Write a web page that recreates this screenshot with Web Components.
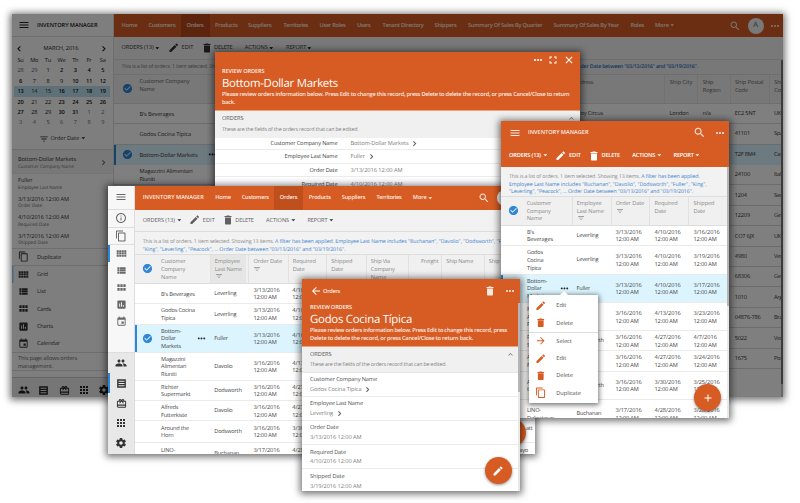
<!DOCTYPE html>
<html lang="en">
<head>
<meta charset="utf-8">
<title>Inventory Manager</title>
<style>
html,body{margin:0;background:#fff;width:800px;height:503px;overflow:hidden}
body{position:relative;font-family:"Open Sans","Noto Sans",sans-serif;font-size:5.65px;line-height:7.65px;color:#484848;text-rendering:geometricPrecision;--o:#d65c24;--b:#2f86d6}
desktop-window,dialog-window,tablet-window,phone-list,phone-form{position:absolute}
desktop-window{left:12px;top:14px;width:771px;height:383px}
dialog-window{left:215px;top:52px;width:365px;height:136px}
tablet-window{left:108px;top:186px;width:427px;height:268px}
phone-list{left:501px;top:121px;width:228px;height:297px}
phone-form{left:302px;top:279px;width:218px;height:212px}
</style>
</head>
<body>
<desktop-window></desktop-window>
<dialog-window></dialog-window>
<tablet-window></tablet-window>
<phone-list></phone-list>
<phone-form></phone-form>
<script>
const ICONS={
menu:'M3 18h18v-2H3v2zm0-5h18v-2H3v2zm0-7v2h18V6H3z',
search:'M15.5 14h-.79l-.28-.27C15.41 12.59 16 11.11 16 9.5 16 5.91 13.09 3 9.5 3S3 5.91 3 9.5 5.91 16 9.5 16c1.61 0 3.09-.59 4.23-1.57l.27.28v.79l5 4.99L20.49 19l-4.99-5zm-6 0C7.01 14 5 11.99 5 9.5S7.01 5 9.5 5 14 7.01 14 9.5 11.99 14 9.5 14z',
edit:'M3 17.25V21h3.75L17.81 9.94l-3.75-3.75L3 17.25zM20.71 7.04c.39-.39.39-1.02 0-1.41l-2.34-2.34c-.39-.39-1.02-.39-1.41 0l-1.83 1.83 3.75 3.75 1.83-1.83z',
del:'M6 19c0 1.1.9 2 2 2h8c1.1 0 2-.9 2-2V7H6v12zM19 4h-3.5l-1-1h-5l-1 1H5v2h14V4z',
check:'M12 2C6.48 2 2 6.48 2 12s4.48 10 10 10 10-4.48 10-10S17.52 2 12 2zm-2 15l-5-5 1.41-1.41L10 14.17l7.59-7.59L19 8l-9 9z',
dots:'M6 10c-1.1 0-2 .9-2 2s.9 2 2 2 2-.9 2-2-.9-2-2-2zm12 0c-1.1 0-2 .9-2 2s.9 2 2 2 2-.9 2-2-.9-2-2-2zm-6 0c-1.1 0-2 .9-2 2s.9 2 2 2 2-.9 2-2-.9-2-2-2z',
full:'M7 14H5v5h5v-2H7v-3zm-2-4h2V7h3V5H5v5zm12 7h-3v2h5v-5h-2v3zM14 5v2h3v3h2V5h-5z',
close:'M19 6.41L17.59 5 12 10.59 6.41 5 5 6.41 10.59 12 5 17.59 6.41 19 12 13.41 17.59 19 19 17.59 13.41 12z',
back:'M20 11H7.83l5.59-5.59L12 4l-8 8 8 8 1.41-1.41L7.83 13H20v-2z',
fwd:'M12 4l-1.41 1.41L16.17 11H4v2h12.17l-5.58 5.59L12 20l8-8z',
info:'M11 17h2v-6h-2v6zm1-15C6.48 2 2 6.48 2 12s4.48 10 10 10 10-4.48 10-10S17.52 2 12 2zm0 18c-4.41 0-8-3.59-8-8s3.59-8 8-8 8 3.59 8 8-3.59 8-8 8zM11 9h2V7h-2v2z',
copy:'M16 1H4c-1.1 0-2 .9-2 2v14h2V3h12V1zm3 4H8c-1.1 0-2 .9-2 2v14c0 1.1.9 2 2 2h11c1.1 0 2-.9 2-2V7c0-1.1-.9-2-2-2zm0 16H8V7h11v14z',
grid:'M1.5 9h4.5V5H1.5zM7 9h4.5V5H7zM12.5 9H17V5h-4.500zM18 9h4.500V5H18zM1.500 14H6v-4H1.500zM7 14h4.500v-4H7zM12.500 14H17v-4h-4.500zM18 14h4.500v-4H18zM1.500 19H6v-4H1.500zM7 19h4.500v-4H7zM12.500 19H17v-4h-4.500zM18 19h4.500v-4H18z',
list:'M3 14h4v-4H3v4zm0 5h4v-4H3v4zM3 9h4V5H3v4zm5 5h13v-4H8v4zm0 5h13v-4H8v4zM8 5v4h13V5H8z',
cards:'M3 11h5V5H3v6zm0 8h5v-6H3v6zm6.500 0h5v-6h-5v6zm6.500 0h5v-6h-5v6zm-6.500-8h5V5h-5v6zM16 5v6h5V5h-5z',
chart:'M19 3H5c-1.1 0-2 .9-2 2v14c0 1.1.9 2 2 2h14c1.1 0 2-.9 2-2V5c0-1.1-.9-2-2-2zM9 17H7v-7h2v7zm4 0h-2V7h2v10zm4 0h-2v-4h2v4z',
event:'M17 12h-5v5h5v-5zM16 1v2H8V1H6v2H5c-1.11 0-1.99.9-1.99 2L3 19c0 1.1.89 2 2 2h14c1.1 0 2-.9 2-2V5c0-1.1-.9-2-2-2h-1V1h-2zm3 18H5V8h14v11z',
people:'M16 11c1.66 0 2.99-1.34 2.99-3S17.66 5 16 5c-1.66 0-3 1.34-3 3s1.34 3 3 3zm-8 0c1.66 0 2.99-1.34 2.99-3S9.66 5 8 5C6.34 5 5 6.34 5 8s1.34 3 3 3zm0 2c-2.33 0-7 1.17-7 3.5V19h14v-2.5c0-2.33-4.67-3.5-7-3.5zm8 0c-.29 0-.62.02-.97.05 1.16.84 1.97 1.97 1.97 3.45V19h6v-2.5c0-2.33-4.67-3.5-7-3.5z',
orders:'M2.500 2.500v19h19v-19zM18.500 8h-13V6h13zM18.500 13h-13v-2h13zM18.500 18h-13v-2h13z',
gift:'M20 6h-2.180c.11-.31.18-.65.18-1 0-1.66-1.34-3-3-3-1.05 0-1.96.54-2.5 1.35l-.5.67-.5-.68C10.96 2.54 10.05 2 9 2 7.34 2 6 3.34 6 5c0 .35.07.69.18 1H4c-1.11 0-1.99.89-1.99 2L2 19c0 1.11.89 2 2 2h16c1.11 0 2-.89 2-2V8c0-1.11-.89-2-2-2zm-5-2c.55 0 1 .45 1 1s-.45 1-1 1-1-.45-1-1 .45-1 1-1zM9 4c.55 0 1 .45 1 1s-.45 1-1 1-1-.45-1-1 .45-1 1-1zm11 15H4v-2h16v2zm0-5H4V8h5.08L7 10.83 8.62 12 11 8.760l1-1.360 1 1.360L15.380 12 17 10.830 14.920 8H20v6z',
apps:'M4 8h4V4H4v4zm6 12h4v-4h-4v4zm-6 0h4v-4H4v4zm0-6h4v-4H4v4zm6 0h4v-4h-4v4zm6-10v4h4V4h-4zm-6 4h4V4h-4v4zm6 6h4v-4h-4v4zm0 6h4v-4h-4v4z',
gear:'M19.43 12.98c.04-.32.07-.64.07-.98s-.03-.66-.07-.98l2.11-1.65c.19-.15.24-.42.12-.64l-2-3.46c-.12-.22-.39-.3-.61-.22l-2.49 1c-.52-.4-1.08-.73-1.69-.98l-.38-2.65C14.46 2.18 14.25 2 14 2h-4c-.25 0-.46.18-.49.42l-.38 2.65c-.61.25-1.17.59-1.69.98l-2.49-1c-.23-.09-.49 0-.61.22l-2 3.46c-.13.22-.07.49.12.64l2.11 1.65c-.04.32-.07.65-.07.98s.03.66.07.98l-2.11 1.65c-.19.15-.24.42-.12.64l2 3.46c.12.22.39.3.61.22l2.49-1c.52.4 1.08.73 1.69.98l.38 2.65c.03.24.24.42.49.42h4c.25 0 .46-.18.49-.42l.38-2.65c.61-.25 1.17-.59 1.69-.98l2.49 1c.23.09.49 0 .61-.22l2-3.46c.12-.22.07-.49-.12-.64l-2.11-1.65zM12 15.5c-1.93 0-3.5-1.57-3.5-3.5s1.57-3.5 3.5-3.5 3.5 1.57 3.5 3.5-1.57 3.5-3.5 3.5z',
filter:'M10 18h4v-2h-4v2zM3 6v2h18V6H3zm3 7h12v-2H6v2z',
right:'M10 5L8 7l5 5-5 5 2 2 7-7z',
left:'M15 5l2 2-5 5 5 5-2 2-7-7z',
up:'M12 8l-6 6 1.41 1.41L12 10.83l4.59 4.58L18 14z',
caret:'M2 7l10 10L22 7z',
add:'M19 13h-6v6h-2v-6H5v-2h6V5h2v6h6v2z'};

/* Square inline icon; "name" picks the glyph, "size" the edge in px. */
customElements.define('ui-icon',class extends HTMLElement{
  connectedCallback(){
    const s=this.getAttribute('size')||10;
    this.attachShadow({mode:'open'}).innerHTML=`<style>:host{display:inline-block;flex:none;width:${s}px;height:${s}px}svg{display:block;width:100%;height:100%;fill:currentColor}</style><svg viewBox="0 0 24 24"><path d="${ICONS[this.getAttribute('name')]}"/></svg>`;
  }});

/* Single-line label; "w" tracks the letters out or in to the given width. */
customElements.define('ui-label',class extends HTMLElement{
  connectedCallback(){
    const root=this.attachShadow({mode:'open'});
    root.innerHTML=`<style>:host{display:inline-block;flex:none;white-space:nowrap;letter-spacing:-.2px;padding-top:1px}</style><span><slot></slot></span>`;
    const w=+this.getAttribute('w');
    if(w){
      this.style.letterSpacing='0';
      const n=root.querySelector('span').getBoundingClientRect().width;
      this.style.letterSpacing=(w-n)/this.textContent.length+'px';
    }
  }});

customElements.define('fab-button',class extends HTMLElement{
  connectedCallback(){
    this.attachShadow({mode:'open'}).innerHTML=`<style>:host{position:absolute;display:flex;align-items:center;justify-content:center;width:27px;height:27px;border-radius:50%;background:var(--o);color:#fff;box-shadow:0 1px 3px rgba(0,0,0,.45)}</style><slot></slot>`;
  }});

const I=(n,s=10,c='')=>`<ui-icon name="${n}" size="${s}"${c?` style="color:${c}"`:''}></ui-icon>`;
const T=(t,w=0,st='')=>t?`<ui-label${w?` w="${w}"`:''}${st?` style="${st}"`:''}>${t}</ui-label>`:'';
const ic=(n,c,s=10,col='')=>[c-s/2,I(n,s,col)];
/* A grid row whose cells start at the given x; x0 is the row's own left edge. */
const row=(x0,h,items,cls='',st='')=>{
  const c=items.map((it,i)=>i<items.length-1?(items[i+1][0]-it[0]).toFixed(2)+'px':'max-content').join(' ');
  return `<div class="row ${cls}" style="height:${h}px;padding-left:${(items[0][0]-x0).toFixed(2)}px;grid-template-columns:${c};${st}">${items.map(i=>`<div class="c ${i[2]||''}">${i[1]}</div>`).join('')}</div>`;
};
const lines=(...a)=>a.map(t=>`<div class="ln">${Array.isArray(t)?T(...t):T(t)}</div>`).join('');
const tools=(x,dark,d)=>[[x,T('ORDERS (13)',32)],ic('caret',x+36,4.5,dark),ic('edit',x+52,11.5),[x+60,T('EDIT',12)],ic('del',x+85,12),[x+92.5,T('DELETE',18.5)],[x+123.3,T('ACTIONS',23)],ic('caret',x+150,4.5,dark),[x+164.6,T('REPORT',20)],ic('caret',x+188.200,4.5,dark)];

const BASE=`<style>
:host{display:block;box-sizing:border-box;box-shadow:0 1px 7px 2px rgba(0,0,0,.55)}
*{box-sizing:border-box}
.row{display:grid;align-items:center;white-space:nowrap}
.row>.c{display:flex;flex-direction:column;justify-content:center;align-items:flex-start;height:auto;min-width:0}
.c.end{align-items:flex-end}
.ln{height:7.65px;line-height:7.65px;white-space:nowrap;display:flex}
.o{background:var(--o);color:#fbe9e0}
.b{font-weight:600}
.blue{color:#3f86cf}
.hd{background:#f0f0f0;color:#8a8a8a}
.dv{border-left:.8px solid #e2e2e2;align-self:stretch}
.clip{overflow:hidden;height:100%;width:100%;position:relative}
.sel{background:#dbf4fe}
.flex{display:flex}
</style>`;
const define=(name,html)=>customElements.define(name,class extends HTMLElement{
  connectedCallback(){this.attachShadow({mode:'open'}).innerHTML=BASE+html}
});

/* Month calendar used in the desktop side bar. */
const weeks=['28 29 1 2 3 4 5','6 7 8 9 10 11 12','13 14 15 16 17 18 19','20 21 22 23 24 25 26','27 28 29 30 31 1 2','3 4 5 6 7 8 9'];
const strong=[[3,4,5,6],[0,4,5,6],[0,3,4,5,6],[0,3,4,5,6],[0,3,4],[]];
define('month-calendar',`<style>:host{box-shadow:none;padding:5.500px 0 0 1.700px;color:#222}
.t{display:flex;justify-content:space-between;align-items:center;height:12px;width:95.500px;padding:0 1px 0 0}
.g{display:grid;grid-template-columns:repeat(7,13.700px);text-align:center;height:10.400px;align-items:center;width:96px}
.dim{color:#6c6c6c}.s{font-weight:600;color:#111}.now{background:#bfe3f0}</style>
<div class="t">${I('left',9.5)}${T('MARCH, 2016',35)}${I('right',9.5)}</div>
<div class="g" style="height:11px">${'Su Mo Tu We Th Fr Sa'.split(' ').map(d=>T(d)).join('')}</div>
${weeks.map((w,i)=>`<div class="g ${i==2?'now':''}">${w.split(' ').map((d,j)=>`<ui-label class="${strong[i].includes(j)?'s':''} ${(i==0&&j<2)||(i==4&&j>4)||i==5?'dim':''}">${d}</ui-label>`).join('')}</div>`).join('')}`);

/* Desktop window, dimmed by the modal backdrop. */
const item=(h,n,t,w,st='')=>row(0,h,[ic(n,11.700,11,'#333'),[25,T(t,w)]],'',st);
const sideField=(a,aw,b,bw)=>`<div style="height:18.500px;padding:2.300px 0 0 6px">${lines([a,aw])}<div class="ln" style="font-size:4.700px;color:#666;height:7px;line-height:6.500px">${T(b,bw)}</div></div>`;
const dRow=(name,city,reg,post,country,addr='')=>row(113,20.430,[
 [121,name=='Bottom-Dollar Markets'?I('check',11,'var(--b)'):''],[139,name?lines(...[].concat(name).map(n=>[n,{'Bottom-Dollar Markets':58,"B's Beverages":34.500,'Godos Cocina Típica':51.500,'Magazzini Alimentari':53}[n]||0])):''],
 [206,name=='Bottom-Dollar Markets'?I('dots',11,'#000'):''],[580,addr?T(addr,22.500):''],[669,T(city,city?19:0)],[702,T(reg)],[734.300,T(post)],[773.400,T(country)]],name=='Bottom-Dollar Markets'?'sel':'rl',name=='Bottom-Dollar Markets'?'box-shadow:inset 2px 0 var(--b)':'');
define('desktop-window',`<style>
.side{width:101.500px;background:#fdfdfd;border-right:1px solid #ddd;color:#333}
.rl{border-bottom:.8px solid #d8d8d8}
.shade{position:absolute;inset:0;background:rgba(0,0,0,.5)}
.main{flex:1;min-width:0;overflow:hidden;color:#333}
</style><div class="clip flex" style="background:#fff">
<div class="side">
 ${row(12,23,[ic('menu',23.500,12),[37,T('INVENTORY MANAGER',60.500)]],'b','border-bottom:1px solid #ddd;color:#222')}
 <month-calendar></month-calendar>
 <div class="flex" style="height:21.600px;align-items:center;padding-left:27px;gap:1.500px">${I('filter',10)}${T('Order Date',28.500)}${I('caret',4.5)}</div>
 <div style="border-top:1px solid #ddd;border-bottom:1px solid #e8e8e8;background:#f0f0f0;height:24.500px;padding:4.500px 5px 0 6px;display:flex;justify-content:space-between"><div>${lines(['Bottom-Dollar Markets',58])}<div style="font-size:4.700px;color:#777;line-height:6.500px">${T('Customer Company Name',56)}</div></div><div style="padding-top:3px">${I('right',9,'#666')}</div></div>
 ${sideField('Fuller',14.500,'Employee Last Name',44)}${sideField('3/13/2016 12:00 AM',51,'Order Date',24)}${sideField('4/10/2016 12:00 AM',51,'Required Date',31)}${sideField('3/17/2016 12:00 AM',51,'Shipped Date',30)}
 ${item(18,'copy','Duplicate',24,'border-top:1px solid #ddd;border-bottom:1px solid #ddd')}
 ${item(17.200,'grid','Grid',11,'box-shadow:inset 1.500px 0 #9cd0f5')}${item(17.200,'list','List',9)}${item(17.200,'cards','Cards',14)}${item(17.200,'chart','Charts',16)}${item(17.200,'event','Calendar',23)}
 <div style="border-top:1px solid #ddd;border-bottom:1px solid #ddd;height:19.500px;padding:1.500px 6px;color:#666">${lines(['This page allows orders',59],['management.',35])}</div>
 <div style="height:6px"></div>
 ${row(12,24.500,[ic('people',23.500,12),ic('orders',43.500,11),ic('gift',64,11),ic('apps',84,12),ic('gear',103.500,12)],'','background:linear-gradient(var(--b),var(--b)) 22px 100%/20px 2px no-repeat,#ececec;color:#222;border-top:1px solid #ccc')}
</div>
<div class="main">
 <div class="flex o" style="height:23px">${row(113,23,[[121,T('Home',16)],[148,T('Customers',27)],[180.500,`<div style="background:#b8481b;width:28.500px;height:23px;display:flex;align-items:center;padding-left:5.500px">${T('Orders',17)}</div>`],[214.500,T('Products',22.500)],[247.500,T('Suppliers',23.500)],[283,T('Territories',24.500)],[319,T('User Roles',26)],[356.500,T('Users',13.500)],[382,T('Tenant Directory',41)],[434,T('Shippers',22)],[467.500,T('Summary Of Sales By Quarter',74.500)],[553,T('Summary Of Sales By Year',65.500)],[630,T('Roles',13.500)],[654.500,T('More',14)],ic('caret',672,4.500),ic('search',734,12),[747,`<div style="width:16px;height:16px;border-radius:50%;background:#f3f3f3;color:#555;display:flex;align-items:center;justify-content:center;font-size:7.500px;font-weight:400">${T('A')}</div>`],ic('dots',774,12)],'b')}</div>
 ${row(113,22.500,tools(121,'#000'),'','background:#f3f3f3;border-bottom:1px solid #ddd')}
 <div class="flex" style="height:15px;padding:2.800px 85px 0 8px;justify-content:space-between;font-size:5.300px;background:#f0f0f0;color:#777;border-bottom:.8px solid #ddd"><div>${T('This is a list of orders. 1 item selected. Sh',93.500)}</div><div class="blue b" style="color:#2a72bd">${T('der Date between "03/13/2016" and "03/19/2016".',117.500)}</div></div>
 ${row(113,29.200,[[121,I('check',11,'var(--b)')],[139,lines(['Customer Company',50],'Name')+'<div class="ln"></div>'],[580,'<div style="padding-top:2.500px">'+lines(['dress',12.500],'','')+'</div>'],[663.800,'<div style="padding:2.500px 0 0 4.500px">'+lines(['Ship City',22.500],'','')+'</div>','dv'],[696.700,'<div style="padding:2.500px 0 0 4.500px">'+lines('Ship',['Region',18],'')+'</div>','dv'],[729.500,'<div style="padding:2.500px 0 0 4px">'+lines(['Ship Postal',28.500],'Code','')+'</div>','dv'],[768.800,'<div style="padding:2.500px 0 0 4px">'+lines('Ship','Country','')+'</div>','dv']],'hd','border-bottom:1px solid #ddd;color:#666')}
 ${dRow("B's Beverages",'London','n/a','EC2 5NT','UK','oy Circus')}${dRow('Godos Cocina Típica','','','41101','Spain')}${dRow('Bottom-Dollar Markets','','','T2F 8M4','Canada')}${dRow(['Magazzini Alimentari','Riuniti'],'','','24100','Italy')}
 ${[['1204','Switzerland'],['12209','Germany'],['CO7 6JX','UK'],['4980','Venezuela'],['68306','Germany'],['1010','Argentina'],['04876-786','Brazil'],['5022','Venezuela'],['1675','Portugal']].map(r=>dRow('','','',r[0],r[1])).join('')}
</div>
<div style="position:absolute;right:0;top:46px;bottom:0;width:1.800px;background:linear-gradient(#777 0 324px,#ccc 324px)"></div>
<div class="shade"></div></div>`);

/* Record dialog over the desktop window. */
const dField=(a,aw,b,bw,ch,h)=>`<div style="display:grid;grid-template-columns:122.500px 1fr;column-gap:13px;height:${h}px;align-items:center;border-bottom:1.200px solid #ececec"><div style="text-align:right;color:#444">${T(a,aw)}</div><div class="flex" style="color:#7d7d7d;align-items:center;gap:1.500px">${T(b,bw)}${ch?I('right',9,'#666'):''}</div></div>`;
define('dialog-window',`<div class="clip" style="background:#fff">
<div class="o" style="height:59px;border-bottom:1px solid #eaa27e;padding-left:7px"><div style="margin-left:-7px">${row(215,15,[ic('dots',538,12),ic('full',553,12),ic('close',568.500,12)],'','color:#fff')}</div>
<div class="b">${lines(['REVIEW ORDERS',42.500])}</div><div style="font-size:11.400px;line-height:16px;height:15.700px;color:#fff">${T('Bottom-Dollar Markets',116)}</div><div class="b">${lines(['Please review orders information below. Press Edit to change this record, press Delete to delete the record, or press Cancel/Close to return',347.500],['back.',13])}</div></div>
<div style="height:26.500px;background:#f0f0f0;padding:3px 4.500px 0 7px"><div class="flex" style="justify-content:space-between;height:11px">${T('ORDERS',21.500,'color:#555')}${I('up',9,'#777')}</div><div style="color:#808080;font-size:5.300px">${T('These are the fields of the orders record that can be edited.',136.500)}</div></div>
${dField('Customer Company Name',67,'Bottom-Dollar Markets',58,1,12.800)}${dField('Employee Last Name',53,'Fuller',14.500,1,13.500)}${dField('Order Date',28,'3/13/2016 12:00 AM',52,0,13.700)}${dField('Required Date',36,'4/10/2016 12:00 AM',52,0,13.700)}
</div>`);

/* Date cell: a date over its time. */
const date=d=>lines([d,d.length*2.92],['12:00 AM',23.200]);
const NAMEW={Customer:24.500,Company:24,Name:15.500,Beverages:26,Employee:25,'Last Name':27,'Order Date':28.500,Required:23,Shipped:21};
const nm=(...a)=>lines(...a.map(t=>[t,NAMEW[t]||0]));
const info=(h,x,ls)=>`<div style="height:${h}px;padding:${x};background:#f2f2f2;color:#8a8a8a;border-bottom:.8px solid #ddd">${ls.map(l=>`<div class="flex" style="height:7.300px;line-height:7.300px;gap:1.300px;font-size:5.300px">${l}</div>`).join('')}</div>`;

/* Tablet window. */
const tRow=(h,n,e,d,r,sel,st='')=>row(135.500,h,[[142.500,sel?I('check',11,'var(--b)'):''],[161.300,nm(...n)],[196.500,sel?I('dots',11,'#222'):''],[214.500,T(e)],[253.600,date(d)],[292.500,date(r)]],sel?'sel':'',(sel?'box-shadow:inset 2px 0 var(--b);':'')+'border-bottom:1.200px solid #eaeaea;'+st);
const hc=(...a)=>`<div style="padding-left:4px">${nm(...a)}</div>`;
define('tablet-window',`<style>.s{display:flex;align-items:center;justify-content:center;color:#686868}.l{border-bottom:1px solid #ddd}.k{color:#333}.on{box-shadow:inset 2px 0 var(--b)}</style>
<div class="clip flex" style="background:#fff">
<div style="width:27.300px;background:#f7f7f7;border-right:.7px solid #ddd">
${[['menu',23.600,'l',12],['info',18,'l',12],['copy',17,'l',12],['grid',17.300,'on',11],['list',17,'',11],['cards',17,'',11],['chart',17,'',11],['event',17,'',11]].map(a=>`<div class="s ${a[2]}" style="height:${a[1]}px">${I(a[0],a[3])}</div>`).join('')}
<div style="height:22.200px"></div>
<div style="background:#e8e8e8;border-top:1px solid #ddd;height:104px">${['people','orders','gift','apps','gear'].map((n,i)=>`<div class="s k ${i==1?'on':''}" style="height:20px">${I(n,i==1||i==2?11:12)}</div>`).join('')}</div>
</div>
<div style="width:399.700px;overflow:hidden">
${row(135.500,23.600,[[143,T('INVENTORY MANAGER',61)],[215.500,T('Home',15.500)],[242,T('Customers',27)],[274.300,`<div style="background:#bf501e;width:28.500px;height:23.600px;display:flex;align-items:center;padding-left:5.700px">${T('Orders',17.500)}</div>`],[309,T('Products',22)],[342,T('Suppliers',23.500)],[376.700,T('Territories',25)],[413,T('More',14)],ic('caret',430.500,4.500),ic('search',484.500,12),[497.500,'<div style="width:16px;height:16px;border-radius:50%;background:#eee"></div>']],'o b')}
${row(135.500,22,tools(143,'#333'),'','background:#f2f2f2;border-bottom:1px solid #ddd;color:#606060')}
${info(23,'5.800px 0 0 7.500px',[T('This is a list of orders. 1 item selected. Showing 13 items.',131)+T('A filter has been applied. Employee Last Name includes "Buchanan", "Davolio", "Dodsworth", "F',226,'color:#3f86cf'),T('"King", "Leverling", "Peacock", ... Order Date between "03/13/2016" and "03/19/2016".',202.500,'color:#3f86cf')])}
${row(135.500,29,[[142.500,I('check',11,'var(--b)')],[161.300,nm('Customer','Company','Name')],[210.500,'<div style="background:#e6e6e6;height:100%;padding:2.500px 0 0 3.500px;width:35px">'+nm('Employee','Last Name')+'<div>'+I('filter',8)+'</div></div>','dv'],[248.700,hc('Order Date')+'<div style="padding-left:4px;height:15.300px">'+I('filter',8)+'</div>','dv'],[288,hc('Required','Date',''),'dv'],[326.500,hc('Shipped','Date',''),'dv'],[366,hc('Ship Via','Company','Name'),'dv'],[408.300,`<div style="width:29.500px;display:flex;justify-content:flex-end">${T('Freight',17.500)}</div><div style="height:15.300px"></div>`,'dv'],[441.500,hc('Ship Name','',''),'dv'],[484,hc('Ship','',''),'dv']],'hd','border-bottom:1px solid #ddd')}
${tRow(20.700,["B's Beverages"],'Leverling','3/13/2016','4/10/2016')}
${tRow(20.300,['Godos Cocina','Típica'],'Leverling','3/13/2016','4/10/2016')}
${tRow(28.200,['Bottom-','Dollar','Markets'],'Fuller','3/13/2016','4/10/2016',1)}
${tRow(28,['Magazzini','Alimentari','Riuniti'],'Davolio','3/16/2016','4/13/2016')}
${tRow(20.300,['Richter','Supermarkt'],'Dodsworth','3/16/2016','4/27/2016')}
${tRow(20.300,['Alfreds','Futterkiste'],'Davolio','3/16/2016','4/27/2016')}
<div class="flex" style="justify-content:space-between;border-bottom:1.200px solid #eaeaea">${tRow(20.200,['Around the','Horn'],'Dodsworth','3/16/2016','3/30/2016',0,'border:0')}<div style="padding:3px 2.500px 0 0">${T('att')}</div></div>
<div class="flex" style="justify-content:space-between">${tRow(20.500,['LINO-',''],'Buchanan','3/17/2016','4/28/2016',0,'border:0;padding-top:1.500px')}<div style="padding:3px 7px 0 0">${T('ayo')}</div></div>
</div>
<fab-button style="left:390.500px;top:232.500px"></fab-button>
</div>`);

/* Context menu that opens from a row's dots. */
const mi=(n,t,w,st='')=>`<div style="display:grid;grid-template-columns:14px 1fr;column-gap:7px;padding-left:6.300px;height:17.250px;align-items:center;${st}">${I(n,11.500,'var(--o)')}${T(t,w)}</div>`;
define('row-menu',`<style>:host{position:absolute;background:#fff;box-shadow:0 1px 5px 1px rgba(0,0,0,.55);width:69px;height:108px;padding-top:2px;color:#505050}
.tip{position:absolute;left:30.500px;top:-4.500px;border:4.500px solid transparent;border-top:0;border-bottom-color:#fff}</style><div class="tip"></div>
${mi('edit','Edit',10)}${mi('del','Delete',16.500)}<div style="height:1px;background:#ddd"></div>${mi('fwd','Select',15.500)}${mi('edit','Edit',10)}${mi('del','Delete',16.500)}${mi('copy','Duplicate',24.500)}`);

/* Phone-sized list. */
const pRow=(h,n,e,d,r,s,sel)=>row(501,h,[[508,''],[527,nm(...n)],[558.500,sel?I('dots',11,'#222'):''],[576.500,T(e)],[615.500,date(d)],[654.500,date(r)],[693.500,date(s)]],sel?'sel':'',(sel?'box-shadow:inset 2px 0 var(--b);':'')+'border-bottom:1.200px solid #eaeaea');
define('phone-list',`<div class="clip" style="background:#fff">
<div class="o" style="height:46px">${row(501,23,[ic('menu',514.500,12),[528,T('INVENTORY MANAGER',60.500)],ic('search',699,13),ic('dots',719.500,12)],'b')}${row(501,23,tools(509),'b','color:#fff')}</div>
<div style="width:226.500px">
${info(29.500,'5.400px 0 0 8px',[T('This is a list of orders. 1 item selected. Showing 13 items.',131)+T('A filter has been applied.',58.500,'color:#3f86cf'),T('Employee Last Name includes "Buchanan", "Davolio", "Dodsworth", "Fuller", "King",',197.500,'color:#3f86cf'),T('"Leverling", "Peacock", ... Order Date between "03/13/2016" and "03/19/2016".',184,'color:#3f86cf')])}
${row(501,29,[[508,I('check',11,'var(--b)')],[526.700,nm('Customer','Company','Name')],[571.700,hc('Employee','Last Name')+'<div style="padding-left:4px;height:7.650px">'+I('filter',8)+'</div>','dv'],[610.700,hc('Order Date')+'<div style="padding-left:4px;height:15.300px">'+I('filter',8)+'</div>','dv'],[649.500,hc('Required','Date',''),'dv'],[688.500,hc('Shipped','Date',''),'dv']],'hd','border-bottom:1px solid #ddd')}
${pRow(20.500,["B's",'Beverages'],'Leverling','3/13/2016','4/10/2016','3/16/2016')}
${pRow(28.500,['Godos','Cocina','Típica'],'Leverling','3/13/2016','4/10/2016','3/19/2016')}
${pRow(28.500,['Bottom-','Dollar','Markets'],'Fuller','3/13/2016','4/10/2016','3/17/2016',1)}
${pRow(28,['Magazzini','Alimentari','Riuniti'],'Davolio','3/16/2016','4/13/2016','3/23/2016')}
${pRow(20.300,['Richter','Supermarkt'],'Dodsworth','3/16/2016','4/27/2016','4/7/2016')}
${pRow(20.500,['Alfreds','Futterkiste'],'Davolio','3/16/2016','4/27/2016','3/24/2016')}
${pRow(28.300,['Around','the Horn'],'Dodsworth','3/16/2016','3/30/2016','3/25/2016')}
${pRow(28,['LINO-','Delicateses'],'Buchanan','3/17/2016','4/28/2016','3/28/2016')}
</div>
<div style="position:absolute;right:0;top:46px;width:2px;bottom:0;background:linear-gradient(#b5b5b5 0 139px,#e8e8e8 139px)"></div>
<fab-button style="left:193px;top:263px">${I('add',12)}</fab-button></div>
<row-menu style="left:28px;top:174px"></row-menu>`);

/* Phone-sized record form. */
const fField=(a,aw,b,bw,ch)=>`<div style="height:24.100px;padding:2.800px 0 0 8px;border-bottom:1.200px solid #eaeaea"><div style="height:10.400px;color:#505050">${T(a,aw)}</div><div class="flex" style="color:#808080;align-items:center;gap:1.500px;height:7.650px">${T(b,bw)}${ch?I('right',9,'#666'):''}</div></div>`;
define('phone-form',`<div class="clip" style="background:#fff">
<div class="o" style="height:67.500px;border-bottom:1px solid #eaa27e">${row(302,24,[ic('back',315.500,12,'#fff'),[323,T('Orders',17)],ic('del',489.500,12),ic('dots',510,12)],'b')}
<div style="padding-left:8px"><div class="b">${lines(['REVIEW ORDERS',42])}</div><div style="font-size:11.400px;line-height:15.500px;height:15.500px;color:#fff">${T('Godos Cocina Típica',102)}</div><div class="b">${lines(['Please review orders information below. Press Edit to change this record, press',197],['Delete to delete the record, or press Cancel/Close to return back.',163])}</div></div></div>
<div style="height:26px;background:#f0f0f0;padding:3px 5.500px 0 8px;border-bottom:.8px solid #e4e4e4"><div class="flex" style="justify-content:space-between;height:10.500px">${T('ORDERS',21.500,'color:#555')}${I('up',9,'#777')}</div><div style="color:#808080;font-size:5.300px">${T('These are the fields of the orders record that can be edited.',136.500)}</div></div>
${fField('Customer Company Name',67,'Godos Cocina Típica',51.500,1)}${fField('Employee Last Name',53,'Leverling',23,1)}${fField('Order Date',28.500,'3/13/2016 12:00 AM',51.500)}${fField('Required Date',36,'4/10/2016 12:00 AM',51.500)}${fField('Shipped Date',34.500,'3/19/2016 12:00 AM',51.500)}
<div style="position:absolute;right:0;top:24px;width:2.500px;bottom:0;background:linear-gradient(#b5b5b5 0 89px,#e8e8e8 89px)"></div>
<fab-button style="left:182.500px;top:178px">${I('edit',12)}</fab-button></div>`);
</script>
</body>
</html>
